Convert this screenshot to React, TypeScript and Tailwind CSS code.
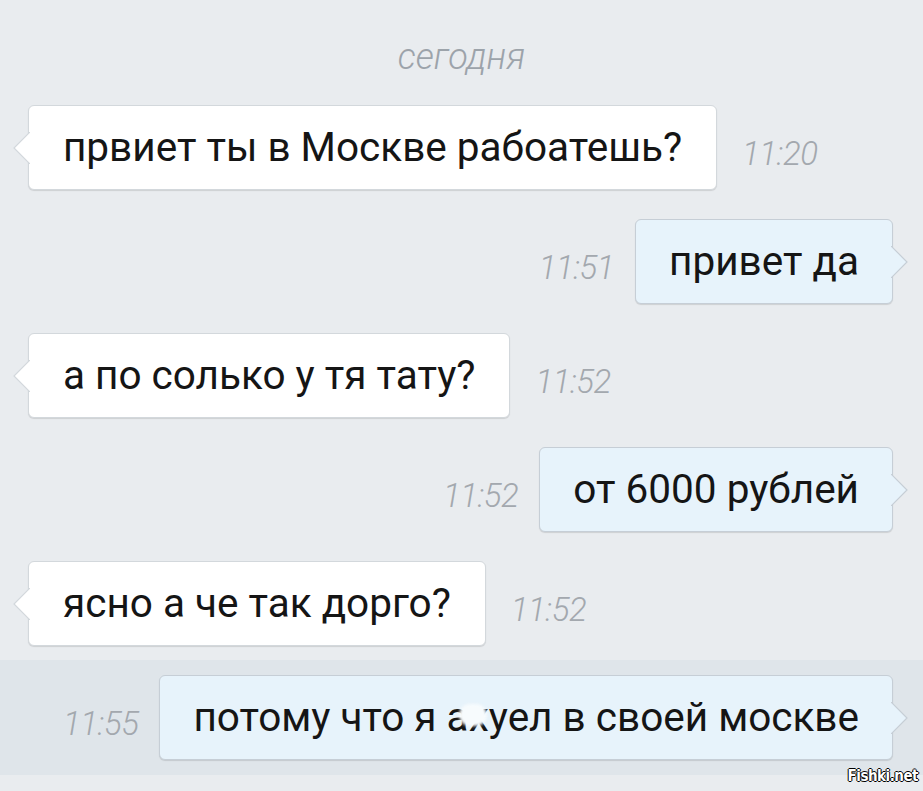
import React from "react";

type Msg = {
  text: React.ReactNode;
  time: string;
  out?: boolean;
};

const messages: Msg[] = [
  { text: "првиет ты в Москве рабоатешь?", time: "11:20" },
  { text: "привет да", time: "11:51", out: true },
  { text: "а по солько у тя тату?", time: "11:52" },
  { text: "от 6000 рублей", time: "11:52", out: true },
  { text: "ясно а че так дорго?", time: "11:52" },
];

function Tail({ out }: { out?: boolean }) {
  // little arrow on the side of the bubble
  return (
    <svg
      width="18"
      height="32"
      viewBox="0 0 18 32"
      className={
        out
          ? "absolute right-[-17px] top-1/2 -translate-y-1/2"
          : "absolute left-[-17px] top-1/2 -translate-y-1/2 -scale-x-100"
      }
    >
      <path
        d="M0 0 L16 16 L0 32"
        fill={out ? "#e7f3fb" : "#ffffff"}
        stroke={out ? "#c6ced6" : "#d3d8dc"}
        strokeWidth="1.2"
      />
    </svg>
  );
}

function Time({ children }: { children: string }) {
  return (
    <span className="mt-[12px] text-[33px] italic font-light text-[#a3a8ae] tracking-[-0.5px] leading-none">
      {children}
    </span>
  );
}

function Bubble({ msg }: { msg: Msg }) {
  return (
    <div
      className={
        msg.out
          ? "relative h-[85px] flex items-center px-[33px] rounded-[6px] bg-[#e7f3fb] border border-[#c6ced6] shadow-[0_1px_1px_rgba(0,0,0,0.12)]"
          : "relative h-[85px] flex items-center px-[34px] rounded-[6px] bg-white border border-[#d3d8dc] shadow-[0_1px_1px_rgba(0,0,0,0.12)]"
      }
    >
      <Tail out={msg.out} />
      <span className="text-[40.5px] text-[#151515] leading-none whitespace-nowrap">{msg.text}</span>
    </div>
  );
}

function Row({ msg }: { msg: Msg }) {
  if (msg.out) {
    return (
      <div className="flex items-center justify-end gap-[21px] pr-[30px]">
        <Time>{msg.time}</Time>
        <Bubble msg={msg} />
      </div>
    );
  }
  return (
    <div className="flex items-center gap-[25px] pl-[28px]">
      <Bubble msg={msg} />
      <Time>{msg.time}</Time>
    </div>
  );
}

export default function App() {
  const last: Msg = {
    time: "11:55",
    out: true,
    text: (
      <>
        потому что я{" "}
        <span className="relative">
          ах
          <span className="absolute left-[12px] top-[11px] w-[28px] h-[22px] rounded-full bg-[#f7fbfd] blur-[1.5px]" />
        </span>
        уел в своей москве
      </>
    ),
  };

  return (
    <div className="relative w-[923px] h-[791px] overflow-hidden bg-[#e9ecef] font-['Roboto',sans-serif]">
      <div className="pt-[38px] h-[76px] text-center">
        <span className="text-[36px] italic font-light text-[#9ca3aa] leading-[38px]">сегодня</span>
      </div>

      <div className="mt-[29px] flex flex-col gap-[29px]">
        {messages.map((m, i) => (
          <Row key={i} msg={m} />
        ))}
      </div>

      {/* selected message */}
      <div className="mt-[14px] py-[15px] bg-[#dfe5ea]">
        <Row msg={last} />
      </div>

      <div className="absolute right-[5px] bottom-[4px] text-[15px] font-bold text-white font-['DejaVu_Sans_Condensed','DejaVu_Sans',sans-serif] tracking-[-0.5px] [text-shadow:-1px_0_#000,1px_0_#000,0_-1px_#000,0_1px_#000]">
        Fishki.net
      </div>
    </div>
  );
}
